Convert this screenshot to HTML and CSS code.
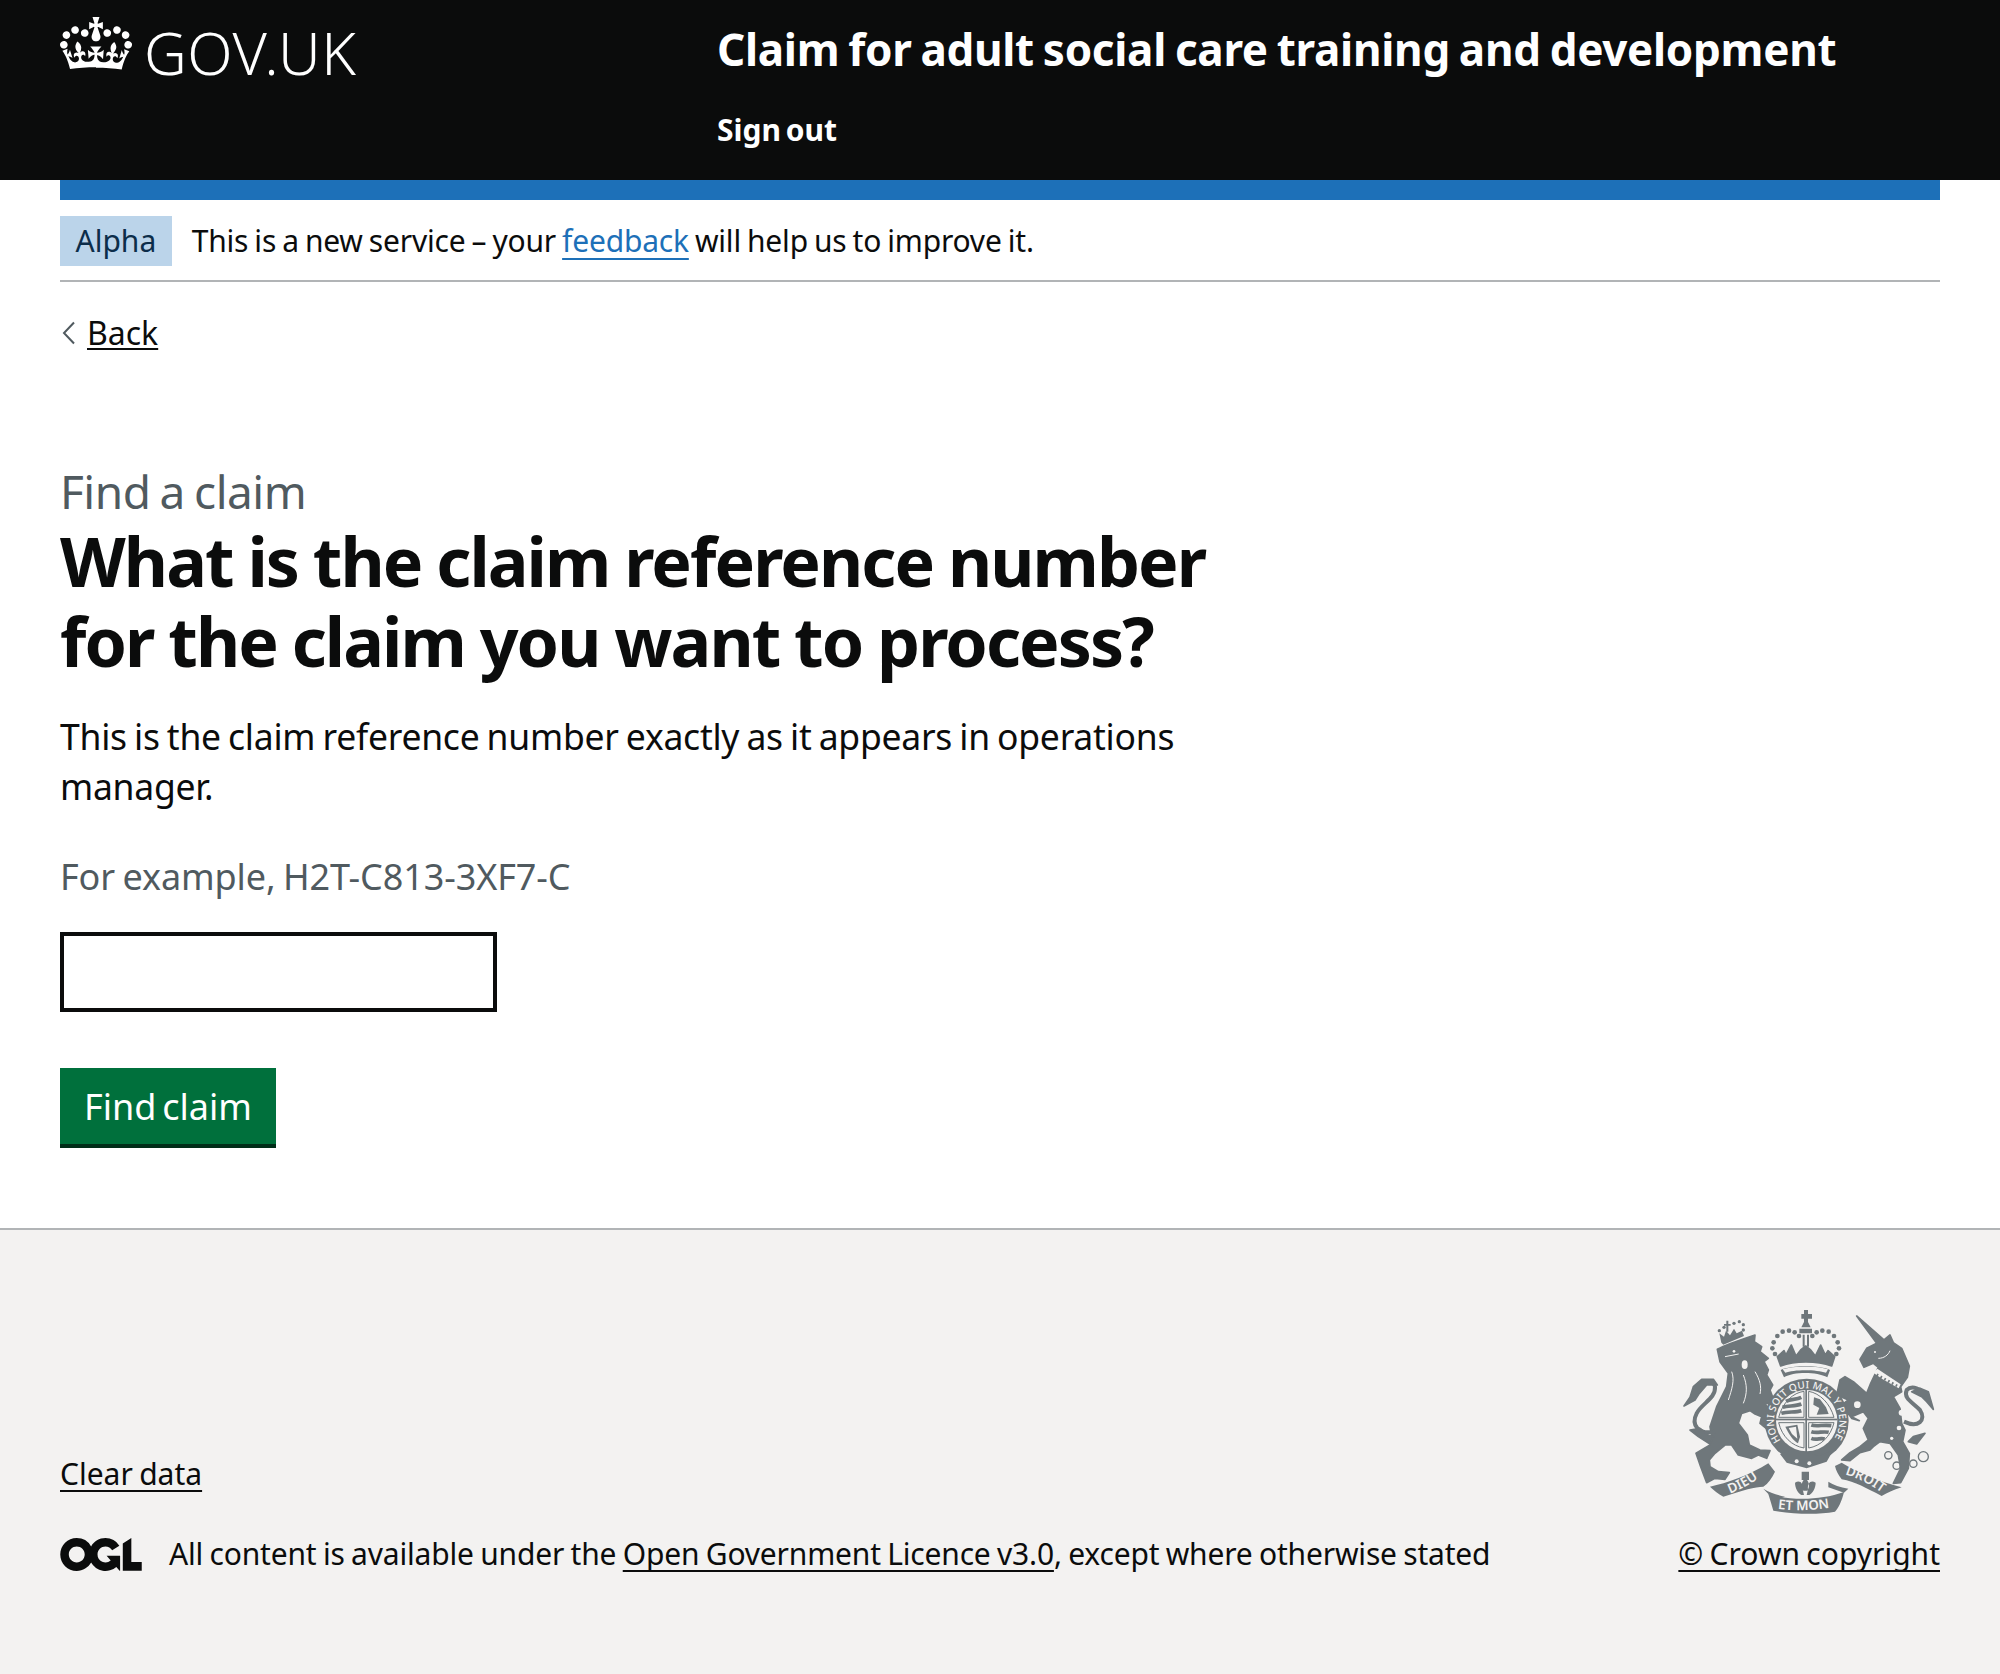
FILE: index.html
```html
<!DOCTYPE html>
<html lang="en">
<head>
<meta charset="utf-8">
<title>Find a claim</title>
<link rel="stylesheet" href="styles.css">
</head>
<body>
<header class="site-header">
  <a class="logo" href="#">
    <svg class="crown" viewBox="0 0 132 97" aria-hidden="true"><path fill="currentColor" fill-rule="evenodd" d="M25 30.2c3.5 1.5 7.7-.2 9.1-3.7 1.5-3.6-.2-7.8-3.9-9.2-3.6-1.4-7.6.3-9.1 3.9-1.4 3.5.3 7.5 3.9 9zM9 39.5c3.6 1.5 7.8-.2 9.2-3.7 1.5-3.6-.2-7.8-3.9-9.1-3.6-1.5-7.6.2-9.1 3.8-1.4 3.5.3 7.5 3.8 9zM4.4 57.2c3.5 1.5 7.7-.2 9.1-3.8 1.5-3.6-.2-7.7-3.9-9.1-3.5-1.5-7.6.3-9.1 3.8-1.4 3.5.3 7.6 3.9 9.1zm38.3-21.4c3.5 1.5 7.7-.2 9.1-3.8 1.5-3.6-.2-7.7-3.9-9.1-3.6-1.5-7.6.3-9.1 3.8-1.3 3.6.4 7.7 3.9 9.1zm64.4-5.6c-3.6 1.5-7.8-.2-9.1-3.7-1.5-3.6.2-7.8 3.8-9.2 3.6-1.4 7.7.3 9.2 3.9 1.3 3.5-.4 7.5-3.9 9zm15.9 9.3c-3.6 1.5-7.7-.2-9.1-3.7-1.5-3.6.2-7.8 3.7-9.1 3.6-1.5 7.7.2 9.2 3.8 1.5 3.5-.3 7.5-3.8 9zm4.7 17.7c-3.6 1.5-7.8-.2-9.2-3.8-1.5-3.6.2-7.7 3.9-9.1 3.6-1.5 7.7.3 9.2 3.8 1.3 3.5-.4 7.6-3.9 9.1zM89.3 35.8c-3.6 1.5-7.8-.2-9.2-3.8-1.4-3.6.2-7.7 3.9-9.1 3.6-1.5 7.7.3 9.2 3.8 1.4 3.6-.3 7.7-3.9 9.1zM69.7 17.7l8.9 4.7V9.3l-8.9 2.8c-.2-.3-.5-.6-.9-.9L72.4 0H59.6l3.6 11.2c-.3.3-.6.5-.9.9l-8.8-2.8v13.1l8.8-4.7c.3.3.6.7.9.9l-5 15.4v.1c-.2.8-.4 1.6-.4 2.4 0 4.1 3.1 7.5 7 8.1h.2c.3 0 .7.1 1 .1.4 0 .7 0 1-.1h.2c4-.6 7.1-4.1 7.1-8.1 0-.8-.1-1.7-.4-2.4V34l-5.1-15.4c.4-.2.7-.6 1-.9zM66 92.8c16.9 0 32.8 1.1 47.1 3.2 4-16.9 8.9-26.7 14-33.5l-9.6-3.4c1 4.9 1.1 7.2 0 10.2-1.5-1.4-3-4.3-4.2-8.7L108.6 76c2.8-2 5-3.2 7.5-3.3-4.4 9.4-10 11.9-13.6 11.2-4.3-.8-6.3-4.6-5.6-7.9 1-4.7 5.7-5.9 8-.5 4.3-8.7-3-11.4-7.6-8.8 7.1-7.2 7.9-13.5 2.1-21.1-8 6.1-8.1 12.3-4.5 20.8-4.7-5.4-12.1-2.5-9.5 6.2 3.4-5.2 7.9-2 7.2 3.1-.6 4.3-6.4 7.8-13.5 7.2-10.3-.9-10.9-8-11.2-13 2.5-.5 7.1 1.8 11 7.3L80.2 60c-4.1 4.4-8 5.3-12.3 5.4 1.4-4.4 8-11.6 8-11.6H55.5s6.4 7.2 7.9 11.6c-4.2-.1-8-1-12.3-5.4l1.4 16.4c3.9-5.5 8.5-7.7 10.9-7.3-.3 5-.7 12.1-11 13-7.2.6-12.9-2.9-13.5-7.2-.7-5 3.8-8.3 7.1-3.1 2.7-8.7-4.6-11.6-9.4-6.2 3.7-8.5 3.6-14.7-4.6-20.8-5.8 7.6-5 13.9 2.2 21.1-4.7-2.6-11.9.1-7.7 8.8 2.3-5.5 7.1-4.2 8.1.5.7 3.3-1.3 7.1-5.7 7.9-3.5.7-9-1.8-13.5-11.2 2.5.1 4.7 1.3 7.5 3.3l-4.7-15.4c-1.2 4.4-2.7 7.2-4.3 8.7-1.1-3-.9-5.3 0-10.2l-9.5 3.4c5 6.9 9.9 16.7 14 33.5 14.8-2.1 30.8-3.2 47.7-3.2z"/></svg>
    <span class="logotype">GOV.UK</span>
  </a>
  <div class="header-content">
    <a class="service-name" href="#">Claim for adult social care training and development</a>
    <a class="sign-out" href="#">Sign out</a>
  </div>
</header>

<div class="blue-bar"></div>

<div class="width-container">
  <div class="phase-banner">
    <strong class="tag">Alpha</strong>
    <span class="phase-text">This is a new service – your <a class="link-blue" href="#">feedback</a> will help us to improve it.</span>
  </div>

  <a class="back-link" href="#"><svg class="chevron" viewBox="0 0 16 24" aria-hidden="true"><path d="M14 1.5 4 12l10 10.5" fill="none" stroke="#505a5f" stroke-width="2"/></svg><span class="back-text">Back</span></a>

  <main class="main">
    <span class="caption">Find a claim</span>
    <h1 class="title">What is the claim reference number for the claim you want to process?</h1>
    <p class="body-text">This is the claim reference number exactly as it appears in operations manager.</p>
    <div class="hint">For example, H2T-C813-3XF7-C</div>
    <input class="text-input" type="text" aria-label="Claim reference number">
    <button class="button" type="button">Find claim</button>
  </main>
</div>

<footer class="footer">
  <div class="footer-inner">
    <div class="footer-meta">
      <a class="footer-link clear-data" href="#">Clear data</a>
      <div class="licence">
        <svg class="ogl" viewBox="0 0 483.2 195.7" aria-hidden="true"><path fill="#0b0c0c" d="M421.5 142.8V.1l-50.7 32.3v161.1h112.4v-50.7zm-122.3-9.6A47.12 47.12 0 0 1 221 97.8c0-26 21.1-47.1 47.1-47.1 16.7 0 31.4 8.7 39.7 21.8l42.7-27.2A97.63 97.63 0 0 0 268.1 0c-36.5 0-68.3 20.1-85.1 49.7A98 98 0 0 0 97.8 0C43.9 0 0 43.9 0 97.8s43.9 97.8 97.8 97.8c36.5 0 68.3-20.1 85.1-49.7a97.76 97.76 0 0 0 149.6 25.4l19.4 22.2h3v-87.8h-80l24.3 27.5zM97.8 145c-26 0-47.1-21.1-47.1-47.1s21.1-47.1 47.1-47.1 47.2 21 47.2 47S123.8 145 97.8 145"/></svg>
        <span class="licence-text">All content is available under the <a class="footer-link" href="#">Open Government Licence v3.0</a>, except where otherwise stated</span>
      </div>
    </div>
    <div class="footer-crest">
      <svg class="crest" viewBox="0 0 900 690" aria-hidden="true">
        <defs>
          <path id="garter-arc" d="M362 452A98 98 0 1 1 518 452"/>
          <path id="rib-left" d="M208 612Q265 590 312 552"/>
          <path id="rib-mid" d="M350 656Q435 668 526 650"/>
          <path id="rib-right" d="M552 552Q615 570 670 612"/>
        </defs>
        <g class="crest-fill">
          <!-- lion -->
          <path class="crest-soft" d="M172 178C195 165 240 150 285 135L283 155 305 170 300 185 325 205 312 215 325 240 320 255 338 285 330 300 345 340 318 340 288 308 330 360 345 405 325 420 300 400 305 380 285 372 270 362 245 370 235 400 262 435 268 465 300 480 330 482 320 505 295 495 275 505 235 495 215 465 195 465 165 490 148 510 150 530 175 545 208 548 195 568 165 565 140 578 122 530 108 490 150 465 155 440 150 410 170 350 200 290 205 250 180 215Z"/>
          <path class="crest-stroke" d="M165 425C115 435 92 405 110 370 125 340 168 325 165 290 160 268 125 272 105 295"/>
          <path class="crest-soft" d="M72 348 90 322 100 290 125 268 160 268 172 285 140 285 118 310 105 330Z"/>
          <path class="crest-soft" d="M90 420 120 415 145 435 160 440 150 462 115 440Z"/>
          <!-- helm crown -->
          <path d="M424 72H432V60H444V72H456V86H444V96L452 112H424L432 96V86H424Z"/>
          <path d="M418 116H456V130H418ZM428 134H434V170H428ZM441 134H447V170H441Z"/>
          <path class="crest-soft" d="M352 200 372 182 378 195 394 165 408 198 422 180 437 168 452 180 466 198 482 165 496 195 504 182 524 200 515 228C470 212 405 212 362 228Z"/>
          <path d="M362 240C395 225 480 225 510 240L502 262C470 245 400 245 372 262Z"/>
          <!-- unicorn -->
          <path class="crest-soft" d="M590 78 672 150 690 135 700 158 725 175 748 228 742 262 722 290 725 305 700 320 720 355 725 400 735 420 728 455 748 490 745 535 722 578 700 580 722 535 715 495 690 460 660 455 640 470 630 480 600 488 570 512 545 510 570 488 600 470 625 450 610 415 625 385 610 365 575 380 598 392 575 385 545 345 565 330 530 315 540 270 555 260 580 275 620 310 632 280 655 232 640 220 612 232 600 208 620 175 650 160Z"/>
          <path class="crest-stroke" d="M732 395C775 415 800 390 780 360 755 335 730 325 740 300 755 285 785 295 800 320"/>
          <path class="crest-soft" d="M780 295 805 305 820 358 800 335 785 320 755 305Z"/>
          <path class="crest-soft" d="M760 440 795 430 770 462 745 455Z"/>
          <!-- garter -->
          <circle cx="440" cy="392" r="126"/>
          <path d="M360 492 400 478 478 498 520 480 500 515 440 535 380 518Z"/>
          <!-- scroll -->
          <path d="M150 590C200 580 270 555 325 520L345 545C335 565 325 580 310 590 285 590 250 600 190 620 175 612 160 600 150 590Z"/>
          <path d="M310 596C330 608 350 615 375 620L345 630 325 612Z"/>
          <path d="M325 612C390 632 480 632 552 606 545 635 535 655 525 665 470 675 400 672 340 662 335 645 330 628 325 612Z"/>
          <path d="M505 575C520 585 540 592 565 596L552 608 505 592Z"/>
          <path d="M525 528 545 518C590 545 660 575 725 592 700 600 680 610 665 618 620 595 585 575 545 568 535 555 528 542 525 528Z"/>
          <!-- fleur -->
          <path d="M425 545H447V570H425ZM436 565C448 575 450 590 442 602H430C422 590 424 575 436 565ZM405 578C420 568 430 580 428 598L432 615H424C415 610 405 595 405 578ZM467 578C452 568 442 580 444 598L440 615H448C457 610 467 595 467 578Z"/>
        </g>
        <g class="crest-light">
          <circle cx="440" cy="392" r="92"/>
          <circle cx="602" cy="262" r="9"/>
          <circle cx="592" cy="344" r="10"/>
          <circle cx="725" cy="368" r="9"/>
          <circle cx="717" cy="414" r="7"/>
          <circle cx="695" cy="445" r="5"/>
          <ellipse cx="254" cy="224" rx="9" ry="13"/>
          <circle cx="222" cy="184" r="4"/>
          <circle cx="645" cy="186" r="3"/>
          <circle cx="410" cy="514" r="6"/>
          <circle cx="448" cy="520" r="6"/>
          <path d="M640 248 668 268 716 295 722 283 680 255 652 236Z"/>
          <path d="M368 238C400 228 475 228 504 238L498 248C470 238 400 238 376 248Z"/>
        </g>
        <g class="crest-line-light">
          <path d="M215 245C225 270 215 300 205 330M250 255C262 285 262 310 250 340M285 245C300 270 305 290 300 312M195 200 236 192M655 205C672 205 685 195 690 182"/>
        </g>
        <path class="crest-collar" d="M650 254 712 288"/>
        <g class="crest-quarters">
          <path d="M432 304C400 308 368 336 356 382H432ZM446 304C480 310 510 340 522 382H446ZM356 398H432V474C396 468 366 440 356 398ZM446 398H522C512 440 482 468 446 474Z"/>
        </g>
        <g class="crest-fill">
          <rect x="436" y="298" width="5" height="188"/>
          <rect x="348" y="386" width="184" height="5"/>
        </g>
        <g class="crest-blots">
          <path d="M378 334C392 326 408 330 424 322M368 352C385 346 405 350 424 342M364 370C385 364 405 368 424 362"/>
          <path d="M454 405C470 411 490 403 514 407M454 425C470 431 488 423 506 427M454 445C468 451 482 443 494 447"/>
        </g>
        <g class="crest-fill">
          <path d="M462 322 480 328 498 352 506 372 470 374 478 354 460 344Z"/>
          <path d="M376 410 412 404 420 440 414 460C400 452 388 435 376 410Z"/>
        </g>
        <g class="crest-light">
          <path d="M386 414 408 410 412 446 396 432Z"/>
        </g>
        <g class="crest-dots">
          <circle cx="337" cy="175" r="7"/><circle cx="341" cy="157" r="7"/><circle cx="352" cy="138" r="7"/><circle cx="368" cy="125" r="7"/><circle cx="387" cy="122" r="7"/><circle cx="404" cy="127" r="7"/><circle cx="417" cy="138" r="7"/>
          <circle cx="537" cy="175" r="7"/><circle cx="533" cy="157" r="7"/><circle cx="522" cy="138" r="7"/><circle cx="506" cy="125" r="7"/><circle cx="487" cy="122" r="7"/><circle cx="470" cy="127" r="7"/><circle cx="457" cy="138" r="7"/>
          <circle cx="345" cy="192" r="7"/><circle cx="529" cy="192" r="7"/>
          <!-- lion's crown -->
          <circle cx="178" cy="122" r="5"/><circle cx="192" cy="112" r="5"/><circle cx="222" cy="100" r="5"/><circle cx="238" cy="95" r="5"/><circle cx="250" cy="104" r="5"/><circle cx="250" cy="120" r="5"/>
          <path d="M199 92H205V102H212V107H205V125H199V107H192V102H199Z"/>
          <path d="M178 130 192 140 198 122 210 136 222 116 230 130 246 122 252 138 190 164 184 158Z"/>
        </g>
        <g class="crest-rings">
          <circle cx="685" cy="496" r="11"/><circle cx="710" cy="527" r="11"/><circle cx="760" cy="521" r="11"/><circle cx="790" cy="500" r="15"/>
        </g>
        <text class="garter-text"><textPath href="#garter-arc" textLength="425" lengthAdjust="spacing">HONI SOIT QUI MAL Y PENSE</textPath></text>
        <text class="motto-text"><textPath href="#rib-left" startOffset="2%">DIEU</textPath></text>
        <text class="motto-text"><textPath href="#rib-mid" startOffset="2%">ET MON</textPath></text>
        <text class="motto-text"><textPath href="#rib-right" startOffset="2%">DROIT</textPath></text>
      </svg>
      <a class="footer-link copyright" href="#">© Crown copyright</a>
    </div>
  </div>
</footer>
</body>
</html>
```
FILE: styles.css
```css
* { box-sizing: border-box; }
html, body { margin: 0; padding: 0; }
body {
  font-family: "Noto Sans", "Liberation Sans", sans-serif;
  color: #0b0c0c;
  background: #fff;
  min-height: 1674px;
  display: flex;
  flex-direction: column;
}
.site-header {
  background: #0b0c0c;
  height: 180px;
  padding: 0 60px;
  display: grid;
  grid-template-columns: 657px 1fr;
}
.logo { display: flex; align-items: flex-start; gap: 12px; color: #fff; text-decoration: none; padding-top: 17px; }
.crown { width: 72px; height: 53px; display: block; }
.logotype { font-size: 59px; line-height: 70px; font-weight: 300; letter-spacing: 0.5px; }
.header-content { display: flex; flex-direction: column; padding-top: 19px; }
.service-name { color: #fff; font-weight: 700; font-size: 44px; line-height: 60px; letter-spacing: -0.3px; word-spacing: -2.2px; text-decoration: none; }
.sign-out { color: #fff; font-weight: 700; font-size: 30px; line-height: 40px; margin-top: 31px; word-spacing: -0.1em; text-decoration: none; }
.blue-bar { height: 20px; background: #1d70b8; margin: 0 60px; }
.width-container { margin: 0 60px; }
.phase-banner { display: flex; align-items: center; gap: 20px; padding: 16px 0 14px; border-bottom: 2px solid #b1b4b6; }
.tag { background: #bbd4ea; color: #0c2d4a; font-weight: 400; font-size: 30px; line-height: 50px; padding: 0 15.5px; }
.phase-text { font-size: 30px; line-height: 50px; letter-spacing: -0.2px; word-spacing: -1.5px; }
.link-blue { color: #1d70b8; text-underline-offset: 6px; text-decoration-thickness: 2px; text-decoration-skip-ink: none; }
.back-link { display: inline-flex; align-items: center; gap: 11px; margin-top: 31px; color: #0b0c0c; text-decoration: none; font-size: 32px; line-height: 40px; }
.chevron { width: 16px; height: 24px; display: block; }
.back-text { display: inline-block; text-decoration: underline; text-underline-offset: 3px; text-decoration-thickness: 2px; text-decoration-skip-ink: none; }
.main { padding-top: 60px; }
.caption { display: block; color: #505a5f; font-size: 46px; line-height: 50px; margin-top: 53px; letter-spacing: -0.5px; word-spacing: -2.3px; }
.title { font-size: 68px; line-height: 80px; font-weight: 700; letter-spacing: -1.9px; word-spacing: -1px; margin: 5px 0 30px; max-width: 1240px; }
.body-text { font-size: 35.5px; line-height: 50px; margin: 0 0 41px; max-width: 1240px; letter-spacing: -0.25px; word-spacing: -1.8px; }
.hint { color: #505a5f; font-size: 36px; line-height: 50px; margin-bottom: 30px; letter-spacing: -0.1px; word-spacing: -1.8px; }
.text-input { display: block; width: 437px; height: 80px; border: 4px solid #0b0c0c; background: #fff; border-radius: 0; margin-bottom: 56px; }
.button { display: block; background: #00703c; color: #fff; border: 0; box-shadow: 0 4px 0 #002d18; font-family: inherit; font-size: 36px; word-spacing: -0.1em; width: 216px; height: 76px; padding: 0; border-radius: 0; }
.footer { margin-top: 84px; flex: 1; background: #f3f2f1; border-top: 2px solid #b1b4b6; padding: 0 60px; display: flex; flex-direction: column; justify-content: flex-end; }
.footer-inner { display: flex; justify-content: space-between; align-items: flex-end; padding-bottom: 100px; }
.footer-link { color: #0b0c0c; text-underline-offset: 5px; text-decoration-thickness: 2px; text-decoration-skip-ink: none; }
.clear-data { font-size: 30px; line-height: 40px; display: inline-block; word-spacing: -0.05em; }
.footer-meta { display: flex; flex-direction: column; gap: 40px; align-items: flex-start; }
.licence { display: flex; align-items: center; gap: 27px; }
.ogl { width: 82px; height: 33px; display: block; }
.licence-text { font-size: 30px; line-height: 40px; letter-spacing: -0.18px; word-spacing: -1.2px; }
.footer-crest { display: flex; flex-direction: column; align-items: flex-end; gap: 14px; }
.crest { width: 300px; height: 230px; display: block; margin-right: -20px; }
.crest-fill { fill: #6f777b; }
.crest-soft { stroke: #6f777b; stroke-width: 5; stroke-linejoin: round; }
.crest-light { fill: #f3f2f1; }
.crest-line-light { fill: none; stroke: #f3f2f1; stroke-width: 3; }
.crest-collar { fill: none; stroke: #6f777b; stroke-width: 8; stroke-dasharray: 5 8; }
.crest-quarters { fill: none; stroke: #6f777b; stroke-width: 3; }
.crest-blots { fill: none; stroke: #6f777b; stroke-width: 11; }
.crest-stroke { fill: none; stroke: #6f777b; stroke-width: 12; }
.crest-dots { fill: #6f777b; }
.crest-rings { fill: none; stroke: #6f777b; stroke-width: 4; }
.garter-text { fill: #f3f2f1; font-size: 30px; font-family: "Noto Sans", sans-serif; font-weight: 500; }
.motto-text { fill: #f3f2f1; font-size: 40px; font-family: "Noto Sans", sans-serif; font-weight: 600; }
.copyright { font-size: 30px; line-height: 40px; word-spacing: -0.05em; }
```
